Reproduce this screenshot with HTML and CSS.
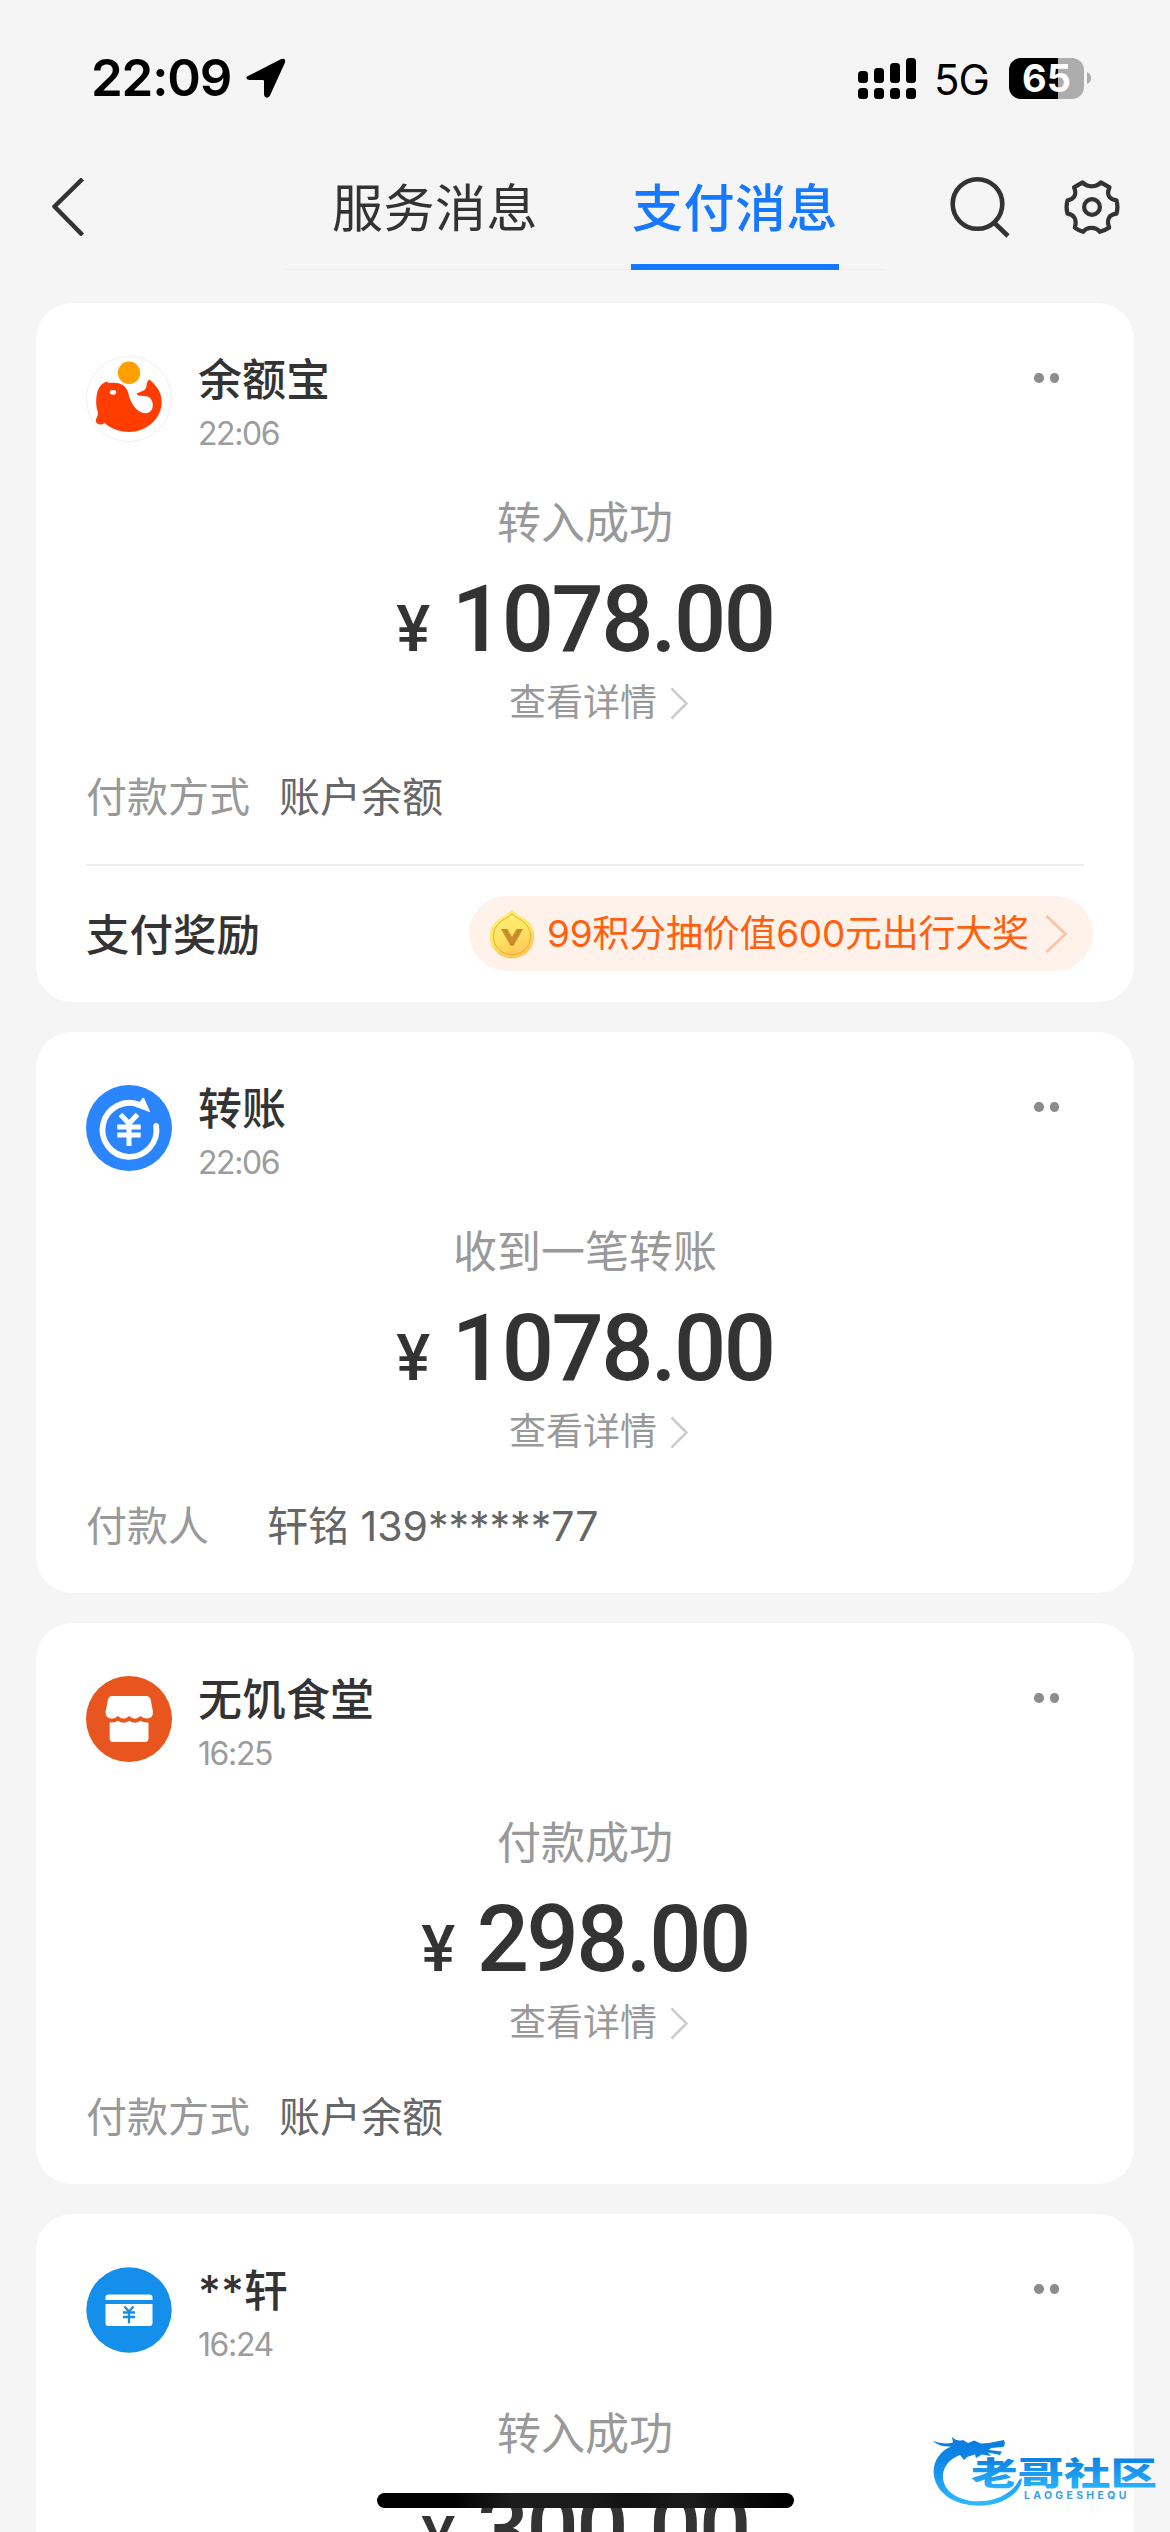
FILE: index.html
```html
<!DOCTYPE html>
<html lang="zh-CN">
<head>
<meta charset="utf-8">
<title>支付消息</title>
<link rel="stylesheet" href="styles.css">
</head>
<body>
<div class="screen">
  <div class="status">
    <span class="clock">22:09</span>
    <svg class="location" width="40" height="40" viewBox="0 0 40 40"><path d="M3 17.6 L35.2 1.1 Q40 -.6 39 4.4 L24 37.5 Q22.6 40 20.4 39.6 Q18.2 39 18 36.5 V23.2 Q18 22 16.800 22 H3.400 Q.4 21.600 .3 19.800 Q.3 18.600 3 17.600Z" fill="#000"/></svg>
    <div class="status-right">
      <svg width="58" height="41" viewBox="0 0 58 41">
        <rect x="0" y="13" width="10" height="12" rx="3.500"/><rect x="16" y="10" width="10" height="15" rx="3.500"/><rect x="32" y="5" width="10" height="20" rx="3.500"/><rect x="48" y="0" width="10" height="25" rx="3.500"/>
        <rect x="0" y="30" width="10" height="11" rx="3.500"/><rect x="16" y="30" width="10" height="11" rx="3.500"/><rect x="32" y="30" width="10" height="11" rx="3.500"/><rect x="48" y="30" width="10" height="11" rx="3.500"/>
      </svg>
      <span class="network">5G</span>
      <div class="battery">65</div>
      <svg width="4" height="12" viewBox="0 0 4 12"><path d="M0 0Q4 2 4 6T0 12Z" fill="#adadad"/></svg>
    </div>
  </div>

  <div class="nav">
    <svg class="back" width="36" height="58" viewBox="0 0 36 58" fill="none" stroke="#333" stroke-width="4.500"><path d="M32.500 1 L4.500 28.500 L32.500 57" stroke-linejoin="round"/></svg>
    <div class="tabs">
      <span class="tab">服务消息</span>
      <span class="tab active">支付消息</span>
    </div>
    <svg class="search" width="60" height="62" viewBox="0 0 60 62" fill="none" stroke="#333" stroke-width="4.600"><circle cx="27.500" cy="28" r="24.800"/><path d="M44.500 47 L58 60"/></svg>
    <svg class="gear" width="58" height="58" viewBox="0 0 58 58" fill="none" stroke="#333" stroke-width="4.200" stroke-linejoin="round"><path d="M19.700 4.400 L11 9.400 C14.500 17 10.500 21.500 4.500 22.300 Q2.600 29 4.500 35.700 C10.500 36.500 14.500 41 11.800 49.600 Q15.500 52.500 20.200 53.800 C24 48.500 33 48.500 36.800 53.800 Q41.500 52.500 46.200 49.600 C43 41 46.500 36.500 53.500 35.700 Q55.400 29 53.500 22.300 C46.500 21.500 43 17 46.500 9.400 L37.800 4.400 C33.500 9.600 24 9.600 19.700 4.400Z"/><circle cx="29" cy="29" r="7.900"/></svg>
  </div>

  <div class="feed">
    <section class="card">
      <header class="head">
        <svg class="avatar" viewBox="0 0 86 86"><circle cx="43" cy="43" r="42.500" fill="#fff" stroke="#eee"/><circle cx="43" cy="16.800" r="11.200" fill="#ff9f00"/><path d="M19.500 26 Q21 25.300 23 27 C32 25.800 40 28 42.300 37 C44 46 50 56.500 59 57.300 C67 57.500 69 48 64.500 42.500 C61 38 55 42 50.700 38.200 C50 36 59 36.500 60.300 31 Q61 24 63.500 23.800 C71 30 75.700 37 75.700 46 C75.700 63 60 76 43 76 C33 76 25 72.500 18.500 67 C15.500 69.500 11 68.800 9.800 65.500 C9.800 62 12.500 60 11.700 55.500 C9 47 9.300 30 19.500 26Z" fill="#ff3d00"/><ellipse cx="27" cy="36.300" rx="3.200" ry="2.400" fill="#fff"/></svg>
        <div class="who"><div class="name">余额宝</div><div class="time">22:06</div></div>
        <div class="more"><i></i><i></i></div>
      </header>
      <div class="title">转入成功</div>
      <div class="amount"><span class="yen">¥</span><span>1078.00</span></div>
      <div class="detail">查看详情<svg width="18" height="33" viewBox="0 0 18 33"><path d="M1.500 1.500 L16.500 16.500 L1.500 31.500" fill="none" stroke="#ccc" stroke-width="2.600"/></svg></div>
      <div class="row"><span class="label">付款方式</span><span class="value">账户余额</span></div>
      <div class="reward">
        <span class="reward-name">支付奖励</span>
        <div class="pill">
          <svg width="46" height="50" viewBox="0 0 46 50"><defs><linearGradient id="coin" x1="0" y1="0" x2=".3" y2="1"><stop offset="0" stop-color="#ffef78"/><stop offset=".55" stop-color="#ffe766"/><stop offset="1" stop-color="#fdc955"/></linearGradient></defs><path d="M23 .5 Q25 3 30 6.500 C40 11 45.300 17.500 45.300 27.500 A22.300 22 0 0 1 .7 27.500 C.7 17.500 6 11 16 6.500 Q21 3 23 .5Z" fill="url(#coin)"/><path d="M23 4.800 Q25 7 29.500 9.500 C37 13.500 41.500 19 41.500 27.500 A18.500 18.200 0 0 1 4.500 27.500 C4.500 19 9 13.500 16.500 9.500 Q21 7 23 4.800Z" fill="none" stroke="#e3b13c" stroke-width="1"/><path d="M12 20 H18.500 L23 28 L27.500 20 H34 L24.300 37 H21.700Z" fill="#c98d2c"/></svg>
          <span class="pill-text">99积分抽价值600元出行大奖</span>
          <svg width="22" height="38" viewBox="0 0 22 38"><path d="M1.500 1 L20.500 19 L1.500 37" fill="none" stroke="#ffc3a3" stroke-width="2.800"/></svg>
        </div>
      </div>
    </section>

    <section class="card">
      <header class="head">
        <svg class="avatar" viewBox="0 0 86 86"><circle cx="43" cy="43" r="43" fill="#2b85ff"/><path d="M70.200 41 A27 27 0 1 1 54 20" fill="none" stroke="#fff" stroke-width="5.800" stroke-linecap="round"/><path d="M57.500 12.800 L63.500 26.500 L50 21.500Z" fill="#fff" stroke="#fff" stroke-linejoin="round"/><path d="M34.500 29.500 L43 38.500 L51.500 29.500 M31.300 42 H54.700 M31.300 50 H54.700 M43 38 V61" fill="none" stroke="#fff" stroke-width="5"/></svg>
        <div class="who"><div class="name">转账</div><div class="time">22:06</div></div>
        <div class="more"><i></i><i></i></div>
      </header>
      <div class="title">收到一笔转账</div>
      <div class="amount"><span class="yen">¥</span><span>1078.00</span></div>
      <div class="detail">查看详情<svg width="18" height="33" viewBox="0 0 18 33"><path d="M1.500 1.500 L16.500 16.500 L1.500 31.500" fill="none" stroke="#ccc" stroke-width="2.600"/></svg></div>
      <div class="row wide"><span class="label">付款人</span><span class="value">轩铭 139******77</span></div>
    </section>

    <section class="card">
      <header class="head">
        <svg class="avatar" viewBox="0 0 86 86"><circle cx="43" cy="43" r="43" fill="#e9551f"/><path d="M26 20 H60 Q64 20 64.800 24 L67 36 Q67 42.500 61 42.500 Q57 42.500 54.500 40 Q51 43 48.800 42.700 Q46 42.500 43.200 40 Q40.500 42.700 37.600 42.700 Q34.500 42.700 32 40 Q29.500 42.700 25.500 42.700 Q19.500 42 19.500 36 L22 23.500 Q22.800 20 26 20Z M23.700 46.500 Q29 47 32 44.800 Q37.500 48.500 43.200 44.800 Q49 48.500 54.500 44.800 Q57 47 62.500 46.500 V62.500 Q62.500 66 59 66 H27.200 Q23.700 66 23.700 62.500Z" fill="#fff"/></svg>
        <div class="who"><div class="name">无饥食堂</div><div class="time">16:25</div></div>
        <div class="more"><i></i><i></i></div>
      </header>
      <div class="title">付款成功</div>
      <div class="amount"><span class="yen">¥</span><span>298.00</span></div>
      <div class="detail">查看详情<svg width="18" height="33" viewBox="0 0 18 33"><path d="M1.500 1.500 L16.500 16.500 L1.500 31.500" fill="none" stroke="#ccc" stroke-width="2.600"/></svg></div>
      <div class="row"><span class="label">付款方式</span><span class="value">账户余额</span></div>
    </section>

    <section class="card">
      <header class="head">
        <svg class="avatar" viewBox="0 0 86 86"><circle cx="43" cy="43" r="42.700" fill="#148fec"/><path d="M22.500 27.500 H63.500 Q66.500 27.500 66.500 30.500 V33 H19.500 V30.500 Q19.500 27.500 22.500 27.500Z M19.500 37 H66.500 V56 Q66.500 59 63.500 59 H22.500 Q19.500 59 19.500 56Z" fill="#fff"/><path d="M38.500 39.500 L43 44.500 L47.500 39.500 M37 45.500 H49 M37 50 H49 M43 44 V56.500" fill="none" stroke="#148fec" stroke-width="2.300"/></svg>
        <div class="who"><div class="name">**轩</div><div class="time">16:24</div></div>
        <div class="more"><i></i><i></i></div>
      </header>
      <div class="title">转入成功</div>
      <div class="amount"><span class="yen">¥</span><span>300.00</span></div>
    </section>
  </div>

  <div class="home-bar"></div>

  <svg class="watermark" width="230" height="80" viewBox="0 0 230 80">
    <defs><linearGradient id="wm" gradientUnits="userSpaceOnUse" x1="0" y1="8" x2="0" y2="74"><stop offset="0" stop-color="#0a7bdc"/><stop offset=".35" stop-color="#0d88e8"/><stop offset="1" stop-color="#2eb8ff"/></linearGradient>
    <linearGradient id="wt" x1="0" y1="0" x2="0" y2="1"><stop offset=".2" stop-color="#0b80e0"/><stop offset=".9" stop-color="#2cb4fc"/></linearGradient></defs>
    <path d="M2 11 Q12 15 22 12.500 L21 7 Q26 12 32 10 L37 13 L43 10.500 L50 13.500 L58 13 L73 10 Q75 15 72 17 L60 18 L58 20 L71 21.500 L69 25 L57 22.500 L60 26 L51 24.500 L45 28 L44 24.500 L36 27 L33 30 L29 25 C12 31 7 48 17 60 C35 79 77 73 88 50 L91 48 Q91 53 88 58 C72 82 20 82 6 55 C-2 39 5 23 20 16.500 Q8 17 2 11Z" fill="url(#wm)"/>
    <text class="wm-name" transform="translate(40 54.500) scale(1.240 .860)" fill="url(#wt)">老哥社区</text>
    <text class="wm-sub" x="93" y="69">LAOGESHEQU</text>
  </svg>
</div>
</body>
</html>
```
FILE: styles.css
```css
* { box-sizing: border-box; }
body { margin: 0; }
svg { display: block; flex: none; }

.screen {
  position: relative;
  width: 1170px;
  height: 2532px;
  overflow: hidden;
  background: #f5f5f5;
  color: #333;
  font-family: Inter, "Noto Sans CJK SC", sans-serif;
}

/* status bar */
.status {
  display: flex;
  align-items: center;
  height: 156px;
  padding: 0 79px 0 91px;
  color: #000;
}
.clock { width: 155px; font-size: 51px; font-weight: 600; line-height: 60px; letter-spacing: -1.2px; }
.status-right { display: flex; align-items: center; margin-left: auto; }
.network { width: 75px; margin-left: 18px; font-size: 42px; line-height: 50px; letter-spacing: -1px; padding-top: 3px; }
.battery {
  width: 75px;
  height: 41px;
  margin-right: 3px;
  border-radius: 12px;
  background: linear-gradient(to right, #000 49px, #adadad 49px);
  color: #fff;
  font-size: 38px;
  font-weight: 700;
  line-height: 41px;
  text-align: center;
}

/* navigation */
.nav { display: flex; height: 147px; padding-left: 50px; }
.back { margin-top: 22px; }
.tabs {
  display: flex;
  justify-content: space-around;
  width: 600px;
  height: 114px;
  margin-left: 199px;
  border-bottom: 1px solid #ededed;
}
.tab { width: 208px; height: 114px; padding-top: 23px; font-size: 51px; line-height: 60px; letter-spacing: .5px; text-align: center; }
.tab.active { border-bottom: 6px solid #1677ff; color: #1677ff; font-weight: 500; }
.search { margin: 20px 0 0 65px; }
.gear { margin: 22px 0 0 53px; }

/* message cards */
.feed { display: flex; flex-direction: column; gap: 30px; padding: 0 36px; }
.card { padding: 53px 50px 42px; border-radius: 36px; background: #fff; }
.card:first-child { padding-bottom: 31px; }
.head { display: flex; height: 93px; }
.avatar { width: 86px; height: 86px; }
.who { flex: 1; margin-left: 26px; }
.name { padding-top: 1px; font-size: 44px; font-weight: 500; line-height: 46px; }
.time { margin-top: 14px; color: #9c9c9c; font-size: 32px; line-height: 33px; letter-spacing: -1.400px; }
.more { display: flex; gap: 6px; padding: 17px 25px 0 0; }
.more i { width: 9.500px; height: 9.500px; border-radius: 50%; background: #8c8c8c; }
.title { margin-top: 49px; color: #999; font-size: 44px; line-height: 50px; text-align: center; }
.amount {
  display: flex;
  justify-content: center;
  align-items: baseline;
  gap: 24px;
  height: 80px;
  margin-top: 32px;
  font-family: Roboto, sans-serif;
  font-size: 92px;
  font-weight: 500;
  line-height: 80px;
  letter-spacing: -2.500px;
}
.yen { font-size: 64px; }
.detail {
  display: flex;
  justify-content: center;
  align-items: center;
  gap: 13px;
  margin: 23px -27px 0 0;
  color: #999;
  font-size: 37px;
  line-height: 40px;
}
.row { display: flex; gap: 29px; margin-top: 49px; font-size: 41px; line-height: 50px; }
.row.wide { gap: 58px; }
.label { color: #999; }
.value { color: #666; }

.reward {
  display: flex;
  align-items: center;
  justify-content: space-between;
  margin-top: 42px;
  padding-top: 30px;
  border-top: 2px solid #eee;
}
.reward-name { padding-top: 2px; font-size: 43.500px; font-weight: 500; line-height: 50px; }
.pill {
  display: flex;
  align-items: center;
  width: 624px;
  height: 75px;
  margin-right: -9px;
  padding: 0 26px 0 20px;
  border-radius: 38px;
  background: #fff2eb;
  color: #ff6010;
}
.pill-text { flex: 1; margin-left: 12px; padding-top: 1px; font-size: 37px; line-height: 44px; letter-spacing: -.25px; white-space: nowrap; }

/* overlays */
.home-bar {
  position: absolute;
  left: 377px;
  top: 2493px;
  width: 417px;
  height: 15px;
  border-radius: 8px;
  background: linear-gradient(to right, #000 18%, #1c1c1c 32%, #1c1c1c 50%, #111 60%, #1c1c1c 75%, #000 97%);
}
.watermark { position: absolute; left: 931px; top: 2430px; }
.wm-name { font: 900 37.500px "Noto Sans CJK SC", sans-serif; }
.wm-sub { fill: #3a9fe8; font: 700 10.500px Inter, sans-serif; letter-spacing: 3.300px; }
```
